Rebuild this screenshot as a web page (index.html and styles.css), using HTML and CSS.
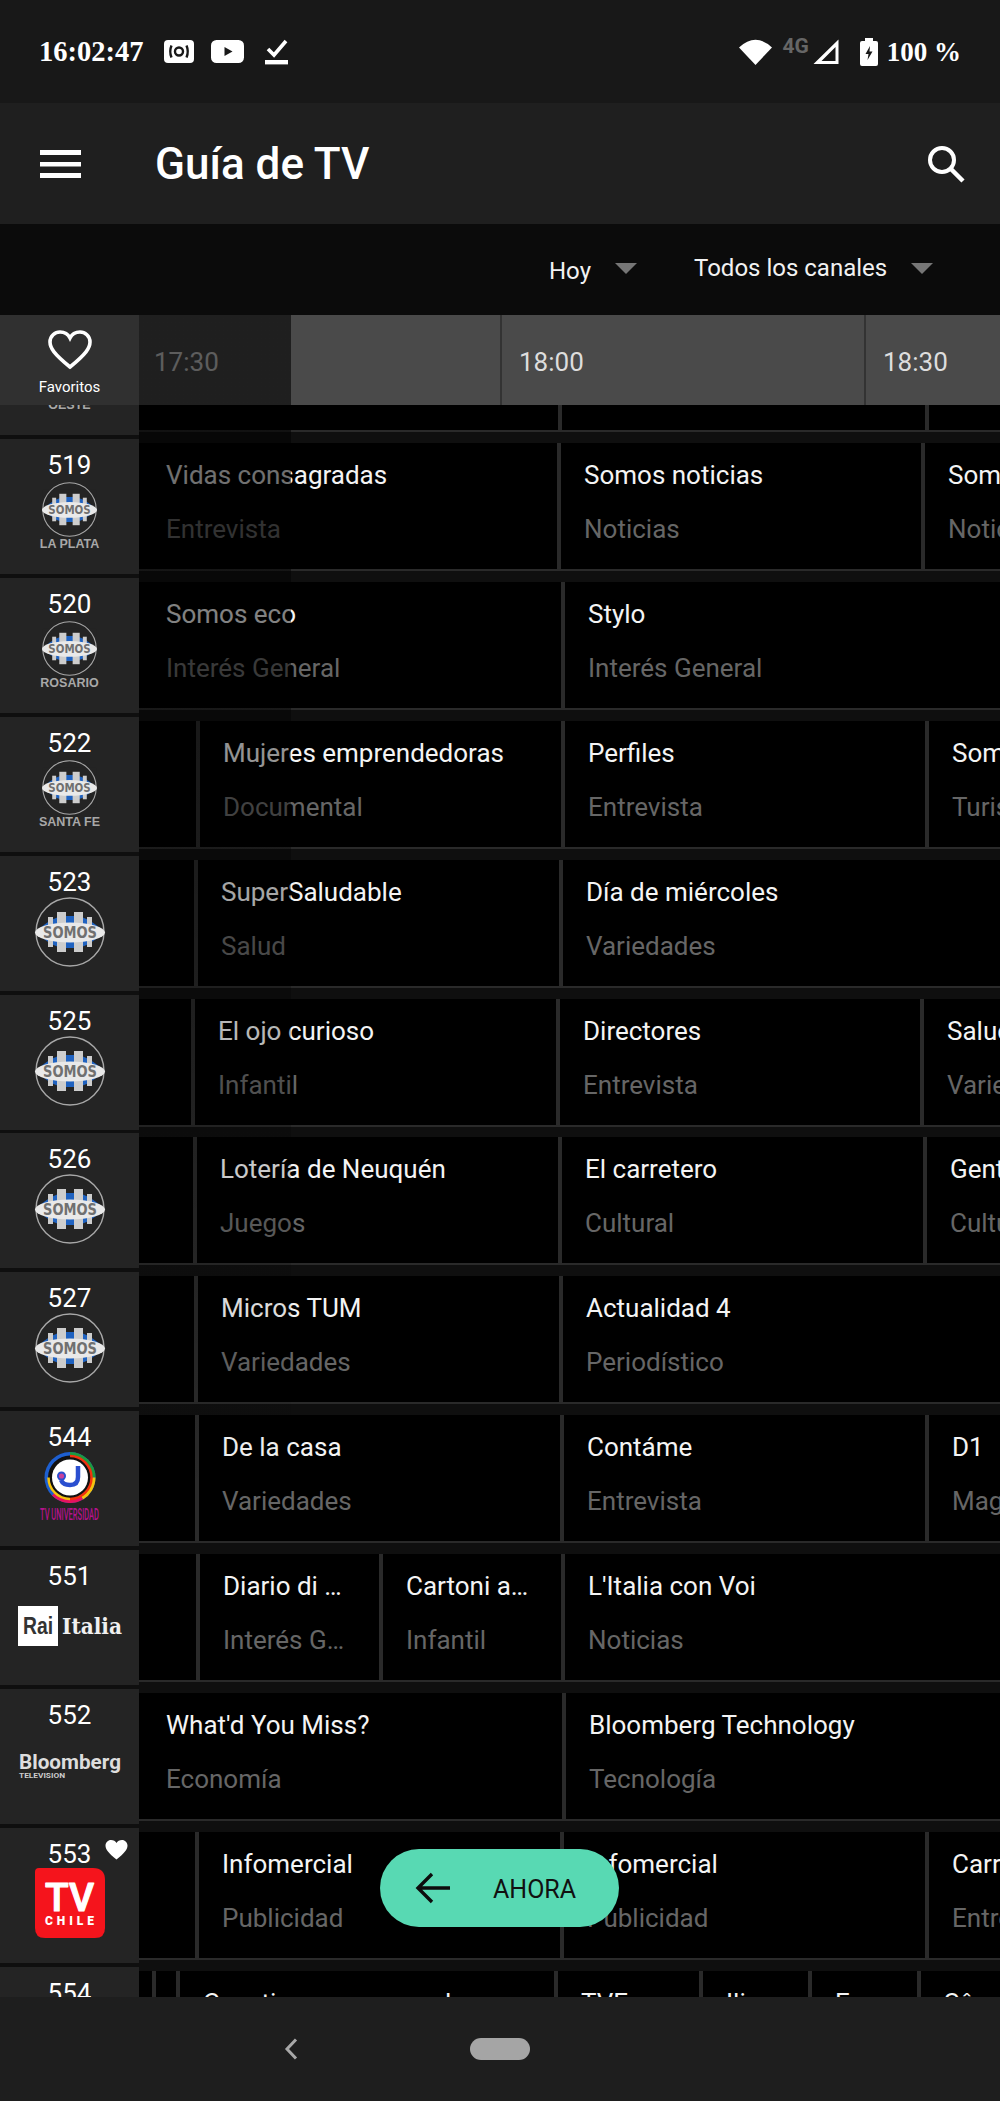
FILE: index.html
```html
<!DOCTYPE html>
<html lang="es">
<head>
<meta charset="utf-8">
<title>Guía de TV</title>
<link rel="stylesheet" href="styles.css">
</head>
<body>
<svg class="defs" width="0" height="0" aria-hidden="true">
  <symbol id="somos" viewBox="0 0 70 70" overflow="visible">
    <path d="M1 35 Q35 1 69 35 Q35 69 1 35Z" fill="#1f62c0"/>
    <rect x="1" y="10" width="68" height="9" fill="#242424"/>
    <rect x="1" y="51" width="68" height="9" fill="#242424"/>
    <circle cx="35" cy="35" r="34" fill="none" stroke="#a8a8a8" stroke-width="1.4"/>
    <g fill="#cdcdcd">
      <rect x="22" y="15" width="9" height="40"/>
      <rect x="39" y="15" width="9" height="40"/>
      <rect x="13" y="20" width="5" height="30"/>
      <rect x="52" y="20" width="5" height="30"/>
    </g>
    <ellipse cx="35" cy="35.5" rx="35" ry="10" fill="#e9e9e9"/>
    <text x="8" y="41" class="somos-word" textLength="54" lengthAdjust="spacingAndGlyphs">SOMOS</text>
  </symbol>
</svg>

<div class="page">
  <header class="status">
    <span class="clock">16:02:47</span>
    <svg class="st-cast" width="30" height="23" viewBox="0 0 30 23"><rect width="30" height="23" rx="4" fill="#fff"/><circle cx="15" cy="11.5" r="4" fill="none" stroke="#181818" stroke-width="2.4"/><path d="M7.5 5.5 Q5 11.5 7.5 17.5 M22.5 5.5 Q25 11.5 22.5 17.5" fill="none" stroke="#181818" stroke-width="2.4"/></svg>
    <svg class="st-yt" width="33" height="23" viewBox="0 0 33 23"><rect width="33" height="23" rx="5.5" fill="#fff"/><path d="M13.5 7 L21.5 11.5 L13.5 16Z" fill="#181818"/></svg>
    <svg class="st-check" width="23" height="27" viewBox="0 0 23 27"><path d="M3 11 L9 17 L21 3" fill="none" stroke="#fff" stroke-width="3.6"/><rect y="22" width="23" height="4.4" fill="#fff"/></svg>
    <div class="st-right">
      <svg width="33" height="27" viewBox="0 0 33 27"><path d="M0 9.5 Q16.5 -6 33 9.5 L16.5 27Z" fill="#fff"/></svg>
      <span class="net">4G</span>
      <svg class="st-sig" width="28" height="27" viewBox="0 0 28 27"><path d="M1.5 26 L26.5 1.5 V26Z M9.5 23 H23.5 V9Z" fill="#fff" fill-rule="evenodd"/></svg>
      <svg class="st-bat" width="18" height="28" viewBox="0 0 18 28"><path d="M5 0 H13 V3 H16 Q18 3 18 5 V26 Q18 28 16 28 H2 Q0 28 0 26 V5 Q0 3 2 3 H5Z" fill="#fff"/><path d="M10 8 L5.5 16 H8.5 L7.5 22 L12.5 13.5 H9.5Z" fill="#181818"/></svg>
      <span class="pct">100 %</span>
    </div>
  </header>

  <div class="appbar">
    <svg class="menu" width="41" height="28" viewBox="0 0 41 28"><path d="M0 0H41V5H0Z M0 12H41V16.500H0Z M0 23H41V28H0Z" fill="#fff"/></svg>
    <h1 class="title">Guía de TV</h1>
    <svg class="search" width="38" height="38" viewBox="0 0 38 38"><circle cx="15" cy="15" r="12" fill="none" stroke="#fff" stroke-width="4"/><path d="M23.500 23.500 L36 36" stroke="#fff" stroke-width="4.500"/></svg>
  </div>

  <div class="filters">
    <span class="filter filter-day">Hoy</span><i class="caret caret-day"></i>
    <span class="filter filter-chan">Todos los canales</span><i class="caret"></i>
  </div>

  <div class="times">
    <div class="fav">
      <svg width="44" height="40" viewBox="0 0 44 40"><path d="M22 37 C6 24 2 18 2 12 C2 6 7 2 12 2 C16 2 20 4 22 8 C24 4 28 2 32 2 C37 2 42 6 42 12 C42 18 38 24 22 37Z" fill="none" stroke="#fff" stroke-width="3.600"/></svg>
      <span class="fav-label">Favoritos</span>
    </div>
    <div class="slot slot-first" style="width:361px">17:30</div>
    <div class="slot" style="width:364px">18:00</div>
    <div class="slot">18:30</div>
  </div>

  <main class="guide">
    <div class="list">

      <div class="row">
        <div class="chan"><span class="num">518</span>
          <svg class="logo" viewBox="0 0 139 94"><use href="#somos" x="42" y="2" width="55" height="55"/><text x="69.500" y="68" class="logo-label">OESTE</text></svg>
        </div>
        <div class="line">
          <div class="prog" style="width:419px"></div>
          <div class="prog div" style="width:367px"></div>
          <div class="prog div rest"></div>
        </div>
      </div>

      <div class="row">
        <div class="chan"><span class="num">519</span>
          <svg class="logo" viewBox="0 0 139 94"><use href="#somos" x="42" y="2" width="55" height="55"/><text x="69.500" y="68" class="logo-label">LA PLATA</text></svg>
        </div>
        <div class="line">
          <div class="prog" style="width:418px"><b>Vidas consagradas</b><em>Entrevista</em></div>
          <div class="prog div" style="width:364px"><b>Somos noticias</b><em>Noticias</em></div>
          <div class="prog div rest"><b>Somos</b><em>Noticias</em></div>
        </div>
      </div>

      <div class="row">
        <div class="chan"><span class="num">520</span>
          <svg class="logo" viewBox="0 0 139 94"><use href="#somos" x="42" y="2" width="55" height="55"/><text x="69.500" y="68" class="logo-label">ROSARIO</text></svg>
        </div>
        <div class="line">
          <div class="prog" style="width:422px"><b>Somos eco</b><em>Interés General</em></div>
          <div class="prog div rest"><b>Stylo</b><em>Interés General</em></div>
        </div>
      </div>

      <div class="row">
        <div class="chan"><span class="num">522</span>
          <svg class="logo" viewBox="0 0 139 94"><use href="#somos" x="42" y="2" width="55" height="55"/><text x="69.500" y="68" class="logo-label">SANTA FE</text></svg>
        </div>
        <div class="line">
          <div class="prog" style="width:57px"></div>
          <div class="prog div" style="width:365px"><b>Mujeres emprendedoras</b><em>Documental</em></div>
          <div class="prog div" style="width:364px"><b>Perfiles</b><em>Entrevista</em></div>
          <div class="prog div rest"><b>Somos</b><em>Turismo</em></div>
        </div>
      </div>

      <div class="row">
        <div class="chan"><span class="num">523</span>
          <svg class="logo" viewBox="0 0 139 94"><use href="#somos" x="35" y="0" width="70" height="70"/></svg>
        </div>
        <div class="line">
          <div class="prog" style="width:55px"></div>
          <div class="prog div" style="width:365px"><b>SuperSaludable</b><em>Salud</em></div>
          <div class="prog div rest"><b>Día de miércoles</b><em>Variedades</em></div>
        </div>
      </div>

      <div class="row">
        <div class="chan"><span class="num">525</span>
          <svg class="logo" viewBox="0 0 139 94"><use href="#somos" x="35" y="0" width="70" height="70"/></svg>
        </div>
        <div class="line">
          <div class="prog" style="width:52px"></div>
          <div class="prog div" style="width:365px"><b>El ojo curioso</b><em>Infantil</em></div>
          <div class="prog div" style="width:364px"><b>Directores</b><em>Entrevista</em></div>
          <div class="prog div rest"><b>Salud</b><em>Variedades</em></div>
        </div>
      </div>

      <div class="row">
        <div class="chan"><span class="num">526</span>
          <svg class="logo" viewBox="0 0 139 94"><use href="#somos" x="35" y="0" width="70" height="70"/></svg>
        </div>
        <div class="line">
          <div class="prog" style="width:54px"></div>
          <div class="prog div" style="width:365px"><b>Lotería de Neuquén</b><em>Juegos</em></div>
          <div class="prog div" style="width:365px"><b>El carretero</b><em>Cultural</em></div>
          <div class="prog div rest"><b>Gente</b><em>Cultura</em></div>
        </div>
      </div>

      <div class="row">
        <div class="chan"><span class="num">527</span>
          <svg class="logo" viewBox="0 0 139 94"><use href="#somos" x="35" y="0" width="70" height="70"/></svg>
        </div>
        <div class="line">
          <div class="prog" style="width:55px"></div>
          <div class="prog div" style="width:365px"><b>Micros TUM</b><em>Variedades</em></div>
          <div class="prog div rest"><b>Actualidad 4</b><em>Periodístico</em></div>
        </div>
      </div>

      <div class="row">
        <div class="chan"><span class="num">544</span>
          <svg class="logo" viewBox="0 0 139 94">
            <circle cx="70" cy="25.500" r="25.500" fill="#1d5fd0"/>
            <path d="M70 0 A25.500 25.500 0 0 1 95.500 25.500 L70 25.500Z" fill="#1c9a3e"/>
            <path d="M95.500 25.500 A25.500 25.500 0 0 1 83 47.500 L70 25.500Z" fill="#f4c20d"/>
            <path d="M83 47.500 A25.500 25.500 0 0 1 52 43.500 L70 25.500Z" fill="#e6125f"/>
            <circle cx="70" cy="25.500" r="22" fill="#111"/>
            <path d="M70 4 A21.500 21.500 0 0 1 91.500 25.500 A21.500 21.500 0 0 1 70 47" fill="none" stroke="#f2320e" stroke-width="2.500"/>
            <path d="M70 47 A21.500 21.500 0 0 1 48.500 25.500" fill="none" stroke="#f4c20d" stroke-width="2.500"/>
            <circle cx="70" cy="25.500" r="18" fill="#fff"/>
            <path d="M78 14 V25 Q78 33 70 33 Q63 33 61 28" fill="none" stroke="#2a4fd0" stroke-width="4.500"/>
            <circle cx="61.500" cy="24" r="4.500" fill="#2a4fd0"/><circle cx="61.500" cy="24" r="2.600" fill="#c6409c"/>
            <text x="40" y="68" class="univ" textLength="59" lengthAdjust="spacingAndGlyphs">TV UNIVERSIDAD</text>
          </svg>
        </div>
        <div class="line">
          <div class="prog" style="width:56px"></div>
          <div class="prog div" style="width:365px"><b>De la casa</b><em>Variedades</em></div>
          <div class="prog div" style="width:365px"><b>Contáme</b><em>Entrevista</em></div>
          <div class="prog div rest"><b>D1</b><em>Magazine</em></div>
        </div>
      </div>

      <div class="row">
        <div class="chan"><span class="num">551</span>
          <svg class="logo" viewBox="0 0 139 94">
            <rect x="18" y="15" width="40" height="40" fill="#fff"/>
            <text x="23" y="43" class="rai" textLength="30" lengthAdjust="spacingAndGlyphs">Rai</text>
            <text x="62" y="43" class="italia" textLength="60" lengthAdjust="spacingAndGlyphs">Italia</text>
          </svg>
        </div>
        <div class="line">
          <div class="prog" style="width:57px"></div>
          <div class="prog div" style="width:183px"><b>Diario di …</b><em>Interés G…</em></div>
          <div class="prog div" style="width:182px"><b>Cartoni a…</b><em>Infantil</em></div>
          <div class="prog div rest"><b>L'Italia con Voi</b><em>Noticias</em></div>
        </div>
      </div>

      <div class="row">
        <div class="chan"><span class="num">552</span>
          <svg class="logo" viewBox="0 0 139 94">
            <text x="19" y="39" class="bloom" textLength="102" lengthAdjust="spacingAndGlyphs">Bloomberg</text>
            <text x="19" y="48" class="bloom-sub" textLength="46" lengthAdjust="spacingAndGlyphs">TELEVISION</text>
          </svg>
        </div>
        <div class="line">
          <div class="prog" style="width:423px"><b>What'd You Miss?</b><em>Economía</em></div>
          <div class="prog div rest"><b>Bloomberg Technology</b><em>Tecnología</em></div>
        </div>
      </div>

      <div class="row">
        <div class="chan"><span class="num">553</span>
          <svg class="fav-badge" width="23" height="20" viewBox="0 0 44 40"><path d="M22 39 C6 26 0 19 0 11 C0 5 5 0 11 0 C16 0 20 2 22 6 C24 2 28 0 33 0 C39 0 44 5 44 11 C44 19 38 26 22 39Z" fill="#fff"/></svg>
          <svg class="logo" viewBox="0 0 139 94">
            <path d="M39 -1 H93 Q105 -1 105 11 V59 Q105 69 95 69 H45 Q35 69 35 59 V3 Q35 -1 39 -1Z" fill="#f5141c"/>
            <text x="45" y="42" class="tv" textLength="49" lengthAdjust="spacingAndGlyphs">TV</text>
            <text x="45" y="56" class="chile" textLength="49">CHILE</text>
          </svg>
        </div>
        <div class="line">
          <div class="prog" style="width:56px"></div>
          <div class="prog div" style="width:365px"><b>Infomercial</b><em>Publicidad</em></div>
          <div class="prog div" style="width:365px"><b>Infomercial</b><em>Publicidad</em></div>
          <div class="prog div rest"><b>Carrera</b><em>Entrevista</em></div>
        </div>
      </div>

      <div class="row">
        <div class="chan"><span class="num">554</span></div>
        <div class="line">
          <div class="prog" style="width:13px"></div>
          <div class="prog div" style="width:24px"></div>
          <div class="prog div" style="width:378px"><b>Cuestiones mayores l</b></div>
          <div class="prog div" style="width:145px"><b>TVE</b></div>
          <div class="prog div" style="width:109px"><b>Ili</b></div>
          <div class="prog div" style="width:109px"><b>En</b></div>
          <div class="prog div rest"><b>Sâ</b></div>
        </div>
      </div>

    </div>
  </main>

  <div class="past"></div>

  <button class="now" type="button">
    <svg width="36" height="32" viewBox="0 0 36 32"><path d="M35 16 H3 M17 2 L3 16 L17 30" fill="none" stroke="#0d0d0d" stroke-width="3.400"/></svg>
    <span>AHORA</span>
  </button>

  <footer class="nav">
    <svg class="nav-back" width="14" height="22" viewBox="0 0 14 22"><path d="M12 1.500 L3 11 L12 20.500" fill="none" stroke="#a8a8a8" stroke-width="3"/></svg>
    <span class="nav-home"></span>
  </footer>
</div>
</body>
</html>
```

FILE: styles.css
```css
* { box-sizing: border-box; }
html, body { margin: 0; padding: 0; background: #000; }
.defs { position: absolute; }
.page {
  position: relative;
  width: 1000px;
  height: 2101px;
  display: flex;
  flex-direction: column;
  overflow: hidden;
  font-family: Roboto, "Liberation Sans", sans-serif;
  color: #fff;
}

/* status bar */
.status {
  height: 103px;
  flex: none;
  background: #181818;
  display: flex;
  align-items: center;
  padding: 0 39px 0 39px;
}
.clock, .pct {
  font-family: "Liberation Serif", serif;
  font-weight: 700;
}
.clock { font-size: 28.500px; line-height: 32px; }
.st-cast { margin-left: 21px; }
.st-yt { margin-left: 17px; }
.st-check { margin-left: 21px; }
.st-right { margin-left: auto; display: flex; align-items: center; }
.net {
  font-size: 21px;
  line-height: 20px;
  font-weight: 700;
  color: #666;
  margin: 0 3px 12px 10px;
}
.st-bat { margin-left: 20px; }
.pct { font-size: 27px; line-height: 32px; margin-left: 9px; }

/* app bar */
.appbar {
  height: 121px;
  flex: none;
  background: #1f1f1f;
  display: flex;
  align-items: center;
  padding: 0 35px 0 40px;
}
.title {
  margin: 0 0 0 74px;
  font-size: 44px;
  line-height: 52px;
  font-weight: 500;
}
.search { margin-left: auto; }

/* filters */
.filters {
  height: 91px;
  flex: none;
  background: #0b0b0b;
  display: flex;
  align-items: center;
  padding-left: 549px;
  padding-bottom: 4px;
}
.filter { font-size: 24px; line-height: 30px; color: #f2f2f2; }
.filter-day { position: relative; top: 3px; }
.filter-chan { margin-left: 57px; }
.caret {
  width: 0;
  height: 0;
  margin-left: 24px;
  margin-top: 2px;
  border-left: 11px solid transparent;
  border-right: 11px solid transparent;
  border-top: 11px solid #767676;
}

/* time header */
.times {
  height: 90px;
  flex: none;
  display: flex;
  background: #4a4a4a;
  position: relative;
  z-index: 2;
}
.fav {
  width: 139px;
  flex: none;
  background: #303030;
  display: flex;
  flex-direction: column;
  align-items: center;
  padding-top: 15px;
}
.fav-label { font-size: 15px; line-height: 18px; margin-top: 8px; }
.slot {
  font-size: 26px;
  line-height: 94px;
  color: #ddd;
  border-left: 2px solid #333;
  padding-left: 17px;
  flex: none;
}
.slot-first { border-left: 0; padding-left: 15px; }

/* guide */
.guide {
  flex: 1;
  min-height: 0;
  overflow: hidden;
  background: #0f0f0f;
}
.list { margin-top: -104.600px; }
.row { height: 138.850px; display: flex; }
.chan {
  position: relative;
  width: 139px;
  height: 135px;
  flex: none;
  background: #242424;
  padding-top: 12px;
}
.num {
  display: block;
  text-align: center;
  font-size: 26px;
  line-height: 29px;
}
.logo { display: block; width: 139px; height: 94px; overflow: visible; }
.fav-badge { position: absolute; left: 105px; top: 12px; }
.logo-label {
  font-family: "Liberation Sans", sans-serif;
  font-size: 12.500px;
  font-weight: 700;
  fill: #a8a8a8;
  text-anchor: middle;
}
.somos-word {
  font-family: "DejaVu Sans", sans-serif;
  font-size: 15px;
  font-weight: 700;
  fill: #707070;
}
.univ { font-family: Roboto, sans-serif; font-size: 16px; font-weight: 500; fill: #b5128d; }
.rai { font-family: "Liberation Sans", sans-serif; font-size: 23px; font-weight: 700; fill: #333; }
.italia { font-family: "DejaVu Serif", serif; font-size: 22px; font-weight: 700; fill: #f0f0f0; }
.bloom { font-family: Roboto, sans-serif; font-size: 21px; font-weight: 700; fill: #ddd; }
.bloom-sub { font-family: Roboto, sans-serif; font-size: 8px; font-weight: 700; fill: #ccc; }
.tv {
  font-family: Roboto, sans-serif;
  font-size: 39px;
  font-weight: 500;
  fill: #fff;
  stroke: #fff;
  stroke-width: 1.200;
  stroke-linejoin: round;
}
.chile { font-family: Roboto, sans-serif; font-size: 12px; font-weight: 900; fill: #fff; }

.line {
  flex: 1;
  min-width: 0;
  height: 128px;
  margin-top: 4px;
  display: flex;
  background: #000;
  border-bottom: 2px solid #2a2a2a;
  overflow: hidden;
}
.prog {
  flex: none;
  height: 126px;
  padding: 16px 0 0 27px;
  overflow: hidden;
  white-space: nowrap;
}
.prog.div {
  border-left: 4px solid #2a2a2a;
  padding-left: 23px;
}
.prog:empty, .prog.div:empty { padding: 0; }
.prog.rest { flex: 1; min-width: 0; }
.prog b, .prog em { display: block; font-size: 26px; font-style: normal; font-weight: 400; }
.prog b { line-height: 32px; color: #f4f4f4; }
.prog em { line-height: 32px; margin-top: 22px; color: #666; }

/* the past of the timeline, dimmed */
.past {
  position: absolute;
  left: 139px;
  top: 315px;
  width: 152px;
  height: 1185px;
  background: linear-gradient(rgba(0,0,0,.58) 90px, rgba(0,0,0,0) 100%);
  z-index: 3;
  pointer-events: none;
}

/* floating button */
.now {
  position: absolute;
  left: 380px;
  top: 1849px;
  width: 239px;
  height: 78px;
  border: 0;
  border-radius: 39px;
  background: #58d9b3;
  display: flex;
  align-items: center;
  padding: 0 0 0 35px;
  font-family: inherit;
  color: #111;
  z-index: 4;
}
.now span { font-size: 25px; line-height: 30px; margin: 3px 0 0 42px; }

/* navigation bar */
.nav {
  height: 104px;
  flex: none;
  background: #1e1e1e;
  display: flex;
  align-items: center;
  padding-left: 284px;
  position: relative;
  z-index: 5;
}
.nav-home {
  width: 60px;
  height: 22px;
  margin-left: 172px;
  border-radius: 11px;
  background: #a5a5a5;
}
```
